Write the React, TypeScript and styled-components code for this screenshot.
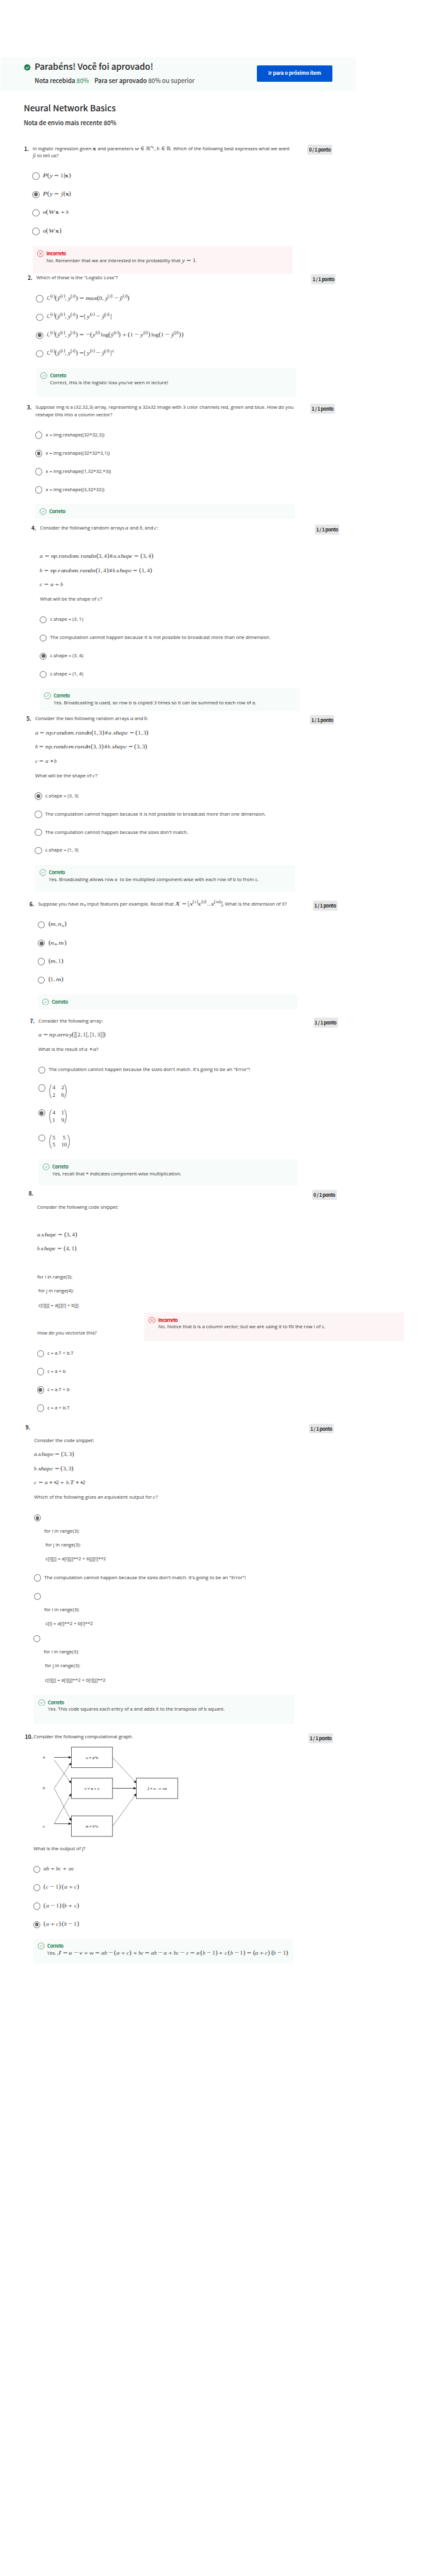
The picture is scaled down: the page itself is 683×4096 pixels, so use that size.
import React from "react";
import styled, { createGlobalStyle } from "styled-components";

const SCALE = 0.68267;
const u = (n: number) => `${(n * SCALE).toFixed(3)}px`;

const HEADING = `"Noto Sans CJK SC", "Open Sans", sans-serif`;
const BODY = `"Open Sans", "Noto Sans", sans-serif`;
const SERIF = `"Liberation Serif", "DejaVu Serif", serif`;
const SANS = `"Liberation Sans", sans-serif`;

const GlobalStyle = createGlobalStyle`
  * { box-sizing: border-box; }
  html, body { margin: 0; padding: 0; background: #fff; }
  body { font-family: ${BODY}; color: #333; font-size: ${u(11.2)}; line-height: ${u(16.8)}; }
`;

const Page = styled.div`
  width: ${u(1000)};
  height: 4096px;
  padding-top: ${u(133)};
  overflow: hidden;
`;

/* ---------- header ---------- */

const Banner = styled.header`
  display: flex;
  align-items: flex-start;
  justify-content: space-between;
  width: ${u(825)};
  height: ${u(79)};
  margin-left: ${u(2)};
  padding: ${u(14)} ${u(54)} 0 ${u(54)};
  background: #f7fbf9;
`;

const BannerText = styled.div`
  display: grid;
  grid-template-columns: ${u(24.7)} auto;
`;

const BannerTitle = styled.h1`
  margin: 0;
  font: 500 ${u(19.95)} / ${u(16)} ${HEADING};
  color: #1f1f1f;
  white-space: nowrap;
`;

const BannerMeta = styled.p`
  grid-column: 2;
  display: flex;
  gap: ${u(12.8)};
  margin: ${u(15.9)} 0 0;
  font: 400 ${u(14.2)} / ${u(16)} ${HEADING};
  color: #333;
  white-space: nowrap;
`;

const Strong = styled.b`
  font-weight: 500;
  color: #1f1f1f;
`;

const Passed = styled.span`
  color: #1d7c50;
`;

const NextButton = styled.button`
  width: ${u(175)};
  height: ${u(38)};
  margin-top: ${u(5)};
  padding: 0 0 ${u(2.4)};
  border: 0;
  border-radius: ${u(2.6)};
  background: #0056d2;
  color: #fff;
  font: 700 ${u(11.8)} / ${u(35.6)} ${HEADING};
  letter-spacing: ${u(-0.25)};
  white-space: nowrap;
`;

const Summary = styled.section`
  padding-left: ${u(55.2)};
  color: #1f1f1f;
`;

const QuizTitle = styled.h2`
  margin: ${u(29.3)} 0 0;
  font: 500 ${u(19.95)} / ${u(20)} ${HEADING};
`;

const QuizGrade = styled.h3`
  margin: ${u(15.5)} 0 0;
  font: 500 ${u(14.2)} / ${u(20)} ${HEADING};
`;

/* ---------- questions ---------- */

const QuestionRow = styled.section<{ $top: number; $left: number }>`
  display: grid;
  grid-template-columns: ${u(20)} ${u(639.4)} ${u(57.4)};
  align-items: start;
  margin-top: ${(p) => u(p.$top)};
  padding-left: ${(p) => u(p.$left)};
`;

const QuestionNumber = styled.div`
  font: 700 ${u(12.4)} / ${u(16.4)} ${HEADING};
  letter-spacing: ${u(-0.3)};
  color: #1f1f1f;
  white-space: nowrap;
`;

const Score = styled.div<{ $shift: number }>`
  height: ${u(23)};
  margin-top: ${(p) => u(p.$shift)};
  border-radius: ${u(2.6)};
  background: #e5e7e8;
  color: #1f1f1f;
  font: 700 ${u(11)} / ${u(23)} ${HEADING};
  letter-spacing: ${u(-0.58)};
  text-align: center;
  white-space: nowrap;
`;

const Line = styled.p<{ $gap?: number; $indent?: number }>`
  margin: ${(p) => u(p.$gap ?? 0)} 0 0;
  padding-left: ${(p) => u(p.$indent ?? 0)};
  min-height: ${u(16.8)};
  white-space: pre;
`;

const Options = styled.div<{ $top: number; $gap: number }>`
  display: flex;
  flex-direction: column;
  gap: ${(p) => u(p.$gap)};
  margin: ${(p) => u(p.$top)} 0 0 ${u(-0.6)};
`;

const OptionRow = styled.label<{ $top?: number; $shift?: number }>`
  display: flex;
  align-items: flex-start;
  min-height: ${u(16.8)};
  margin: ${(p) => u(p.$top ?? 0)} 0 0 ${(p) => u(p.$shift ?? 0)};
  white-space: pre;
`;

const OptionText = styled.span`
  display: block;
  margin: ${u(-0.8)} 0 0 ${u(7.6)};
`;

const Radio = styled.span<{ $checked?: boolean }>`
  display: grid;
  place-items: center;
  flex: none;
  width: ${u(16.6)};
  height: ${u(16.6)};
  border: ${u(1.7)} solid #6a6a6a;
  border-radius: 50%;
  &::after {
    content: "";
    width: ${u(8.6)};
    height: ${u(8.6)};
    border-radius: 50%;
    background: ${(p) => (p.$checked ? "#636363" : "transparent")};
  }
`;

const FeedbackBox = styled.div<{ $ok: boolean; $top: number; $height: number }>`
  display: grid;
  grid-template-columns: ${u(22)} auto;
  align-content: start;
  flex: none;
  width: ${u(605)};
  height: ${(p) => u(p.$height)};
  margin-top: ${(p) => u(p.$top)};
  padding: ${u(8.5)} 0 0 ${u(10)};
  background: ${(p) => (p.$ok ? "#f7fbf9" : "#fdf5f5")};
`;

const FeedbackTitle = styled.div<{ $ok: boolean }>`
  font: 700 ${u(10.9)} / ${u(16.8)} ${HEADING};
  letter-spacing: ${u(-0.46)};
  color: ${(p) => (p.$ok ? "#1d7c50" : "#d30001")};
`;

const FeedbackBody = styled.div`
  grid-column: 2;
  white-space: pre;
`;

const SideBySide = styled.div`
  display: flex;
  align-items: flex-start;
  margin-top: ${u(8)};
`;

const SideText = styled.div`
  flex: none;
  width: ${u(249.5)};
  padding-top: ${u(39.2)};
`;

/* ---------- mathematics ---------- */

const Formula = styled.span`
  font-family: ${SERIF};
  font-size: ${u(13.55)};
  line-height: 0;
  white-space: nowrap;
`;
const Sup = styled.sup`
  font-size: 0.7em;
  line-height: 0;
  vertical-align: 0.62em;
`;
const Sub = styled.sub`
  font-size: 0.7em;
  line-height: 0;
  vertical-align: -0.22em;
`;
const Glyph = styled.span<{ $advance: number; $natural: number; $side?: number; $after?: number }>`
  display: inline-block;
  width: ${(p) => p.$advance}em;
  margin: 0 ${(p) => p.$after ?? p.$side ?? 0}em 0 ${(p) => p.$side ?? 0}em;
  transform: scaleX(${(p) => (p.$advance / p.$natural).toFixed(3)});
  transform-origin: 0 0;
`;
const Fence = styled(Glyph)`
  font-size: 1.12em;
`;
const Symbol = styled.span`
  font-family: "DejaVu Sans", sans-serif;
  font-size: 0.92em;
`;
const Thin = styled.span`
  display: inline-block;
  width: 0.17em;
`;

/* Advance in the mathematical face, and the serif face's own advance, in em. */
const ITALIC: Record<string, [number, number]> = {
  a: [0.529, 0.5], b: [0.429, 0.5], c: [0.433, 0.444], d: [0.52, 0.5], e: [0.466, 0.444],
  h: [0.576, 0.5], i: [0.345, 0.278], m: [0.878, 0.722], n: [0.6, 0.5], o: [0.485, 0.5],
  p: [0.503, 0.5], r: [0.465, 0.389], s: [0.469, 0.389], u: [0.572, 0.5], v: [0.51, 0.444],
  w: [0.73, 0.667], x: [0.572, 0.444], y: [0.5, 0.444], ŷ: [0.5, 0.444], σ: [0.571, 0.5],
  P: [0.76, 0.611], X: [0.86, 0.611], J: [0.64, 0.444], T: [0.7, 0.556], W: [1.06, 0.833],
};

const group = (src: string, open: number) => {
  let depth = 0;
  for (let i = open; i < src.length; i++) {
    if (src[i] === "{") depth++;
    if (src[i] === "}" && --depth === 0) return i;
  }
  return src.length;
};

/* Small TeX-like notation: ^{..} _{..} @{bold} !{roman}, letters italic. */
function parse(src: string): React.ReactNode[] {
  const out: React.ReactNode[] = [];
  for (let i = 0; i < src.length; i++) {
    const c = src[i];
    const next = src[i + 1];
    if ("^_@!".includes(c) && next === "{") {
      const end = group(src, i + 1);
      const inner = src.slice(i + 2, end);
      if (c === "^") out.push(<Sup key={i}>{parse(inner)}</Sup>);
      else if (c === "_") out.push(<Sub key={i}>{parse(inner)}</Sub>);
      else if (c === "@") out.push(<Glyph as="b" key={i} $advance={0.607} $natural={0.5}>{inner}</Glyph>);
      else out.push(<span key={i}>{inner}</span>);
      i = end;
    } else if (c === "=") {
      out.push(<Glyph key={i} $advance={0.778} $natural={0.564} $side={0.278} $after={next === "|" ? 0.05 : 0.278}>=</Glyph>);
    } else if (c === "∈") {
      out.push(<Glyph key={i} $advance={0.667} $natural={0.713} $side={0.278}>∈</Glyph>);
    } else if ("+−".includes(c)) {
      const unary = src[i - 1] === "=";
      out.push(<Glyph key={i} $advance={0.778} $natural={0.564} $side={unary ? 0 : 0.222}>{c}</Glyph>);
    } else if (c === "∗") {
      out.push(<Glyph key={i} $advance={0.5} $natural={0.5} $side={src[i - 1] === "∗" ? 0 : 0.222}>∗</Glyph>);
    } else if (c === "#") {
      out.push(<Glyph key={i} $advance={0.5} $natural={0.5} $side={0.12}>#</Glyph>);
    } else if (c === ",") {
      out.push(<Glyph key={i} $advance={0.278} $natural={0.25} $side={0} $after={0.167}>,</Glyph>);
    } else if ("()".includes(c)) {
      out.push(<Fence key={i} $advance={0.347} $natural={0.333}>{c}</Fence>);
    } else if ("[]|".includes(c)) {
      out.push(<Fence key={i} $advance={0.248} $natural={c === "|" ? 0.2 : 0.333}>{c}</Fence>);
    } else if ("ℝℒ".includes(c)) out.push(<Symbol key={i}>{c}</Symbol>);
    else if (c === " ") out.push(<Thin key={i} />);
    else if (ITALIC[c]) {
      out.push(
        <Glyph as="i" key={i} $advance={ITALIC[c][0]} $natural={ITALIC[c][1]} $side={"yŷ".includes(c) ? 0.06 : 0} $after={0}>
          {c}
        </Glyph>
      );
    } else out.push(<React.Fragment key={i}>{c}</React.Fragment>);
  }
  return out;
}

const M = ({ t }: { t: string }) => <Formula>{parse(t)}</Formula>;

const MatrixBox = styled.span`
  display: flex;
  align-items: stretch;
  height: ${u(32.8)};
  margin: ${u(0.8)} 0 0 ${u(1.5)};
  font: ${u(13.55)} / ${u(16.8)} ${SERIF};
`;
const MatrixCells = styled.span`
  display: grid;
  grid-template-columns: auto auto;
  column-gap: ${u(13.5)};
  justify-items: center;
  margin: 0 ${u(1)} 0 ${u(1.5)};
`;
const Bracket = ({ flip = false }: { flip?: boolean }) => (
  <svg width={6 * SCALE} height={32.8 * SCALE} viewBox="0 0 6 33" preserveAspectRatio="none">
    <path
      d={flip ? "M.6 .5C6.2 8 6.2 25 .6 32.5" : "M5.4 .5C-.2 8 -.2 25 5.4 32.5"}
      fill="none"
      stroke="#333"
      strokeWidth="1.1"
    />
  </svg>
);
const Matrix = ({ cells }: { cells: string[] }) => (
  <MatrixBox>
    <Bracket />
    <MatrixCells>
      {cells.map((c, i) => (
        <span key={i}>{c}</span>
      ))}
    </MatrixCells>
    <Bracket flip />
  </MatrixBox>
);

/* ---------- icons and diagram ---------- */

const Icon = styled.svg<{ $top: number }>`
  display: block;
  width: ${u(15.6)};
  height: ${u(15.6)};
  margin-top: ${(p) => u(p.$top)};
`;

const PassedIcon = () => (
  <Icon viewBox="0 0 16 16" $top={1.9}>
    <circle cx="8" cy="8" r="7.5" fill="#1d7c50" />
    <path d="M4.4 8.2l2.5 2.4 4.7-4.8" fill="none" stroke="#fff" strokeWidth="1.6" />
  </Icon>
);
const StatusIcon = ({ ok }: { ok: boolean }) => (
  <Icon viewBox="0 0 16 16" $top={1.4}>
    <circle cx="8" cy="8" r="7.4" fill="none" stroke={ok ? "#1d7c50" : "#d30001"} strokeWidth="0.9" />
    <path
      d={ok ? "M5 8.3l2 1.9 4-4.6" : "M4.8 4.8l6.4 6.4M11.2 4.8l-6.4 6.4"}
      fill="none"
      stroke={ok ? "#1d7c50" : "#d30001"}
      strokeWidth="0.9"
    />
  </Icon>
);

const Diagram = styled.svg`
  display: block;
  width: ${u(350)};
  height: ${u(216)};
  margin-top: ${u(11.5)};
`;

const NODES = [
  { x: 88.3, y: 4.4, label: "u = a*b" },
  { x: 88.3, y: 76.4, label: "v = a + c" },
  { x: 88.3, y: 164.4, label: "w = b*c" },
  { x: 239.8, y: 76.4, label: "J = u - v +w" },
];
const INPUTS = [
  { y: 28.4, label: "a" },
  { y: 100.4, label: "b" },
  { y: 188.4, label: "c" },
];
const EDGES = [
  [48.5, 28.4, 88, 28.4],
  [48.5, 34.5, 88, 88.3],
  [48.5, 100.4, 88, 40.8],
  [48.5, 100.4, 88, 176],
  [48.5, 182.5, 88, 112.8],
  [48.5, 182.8, 88, 182.8],
  [184.5, 28.8, 239.5, 88.3],
  [184.5, 100.4, 239.5, 100.4],
  [184.5, 188.4, 239.5, 112.6],
];

const ComputationGraph = () => (
  <Diagram viewBox="0 0 350 216">
    <defs>
      <marker id="tip" viewBox="0 0 7 6" refX="6.8" refY="3" markerWidth="7" markerHeight="6" orient="auto" markerUnits="userSpaceOnUse">
        <path d="M0 0L7 3L0 6L1.2 3Z" fill="#000" />
      </marker>
    </defs>
    {EDGES.map(([x1, y1, x2, y2], i) => (
      <line key={i} x1={x1} y1={y1} x2={x2} y2={y2} stroke="#000" strokeWidth={y1 === y2 ? 1 : 0.6} markerEnd="url(#tip)" />
    ))}
    {NODES.map((n) => (
      <g key={n.label}>
        <rect x={n.x} y={n.y} width="96" height="48" fill="#fff" stroke="#000" strokeWidth="0.9" />
        <text x={n.x + 48} y={n.y + 27.3} textAnchor="middle" fontFamily={SANS} fontSize="9" fill="#222">
          {n.label}
        </text>
      </g>
    ))}
    {INPUTS.map((n) => (
      <text key={n.label} x="24.3" y={n.y + 2.8} textAnchor="middle" fontFamily={SANS} fontSize="9" fill="#333">
        {n.label}
      </text>
    ))}
  </Diagram>
);

/* ---------- composition ---------- */

interface QuestionProps {
  n: number;
  top: number;
  left: number;
  points: number;
  shift?: number;
  children: React.ReactNode;
}
const Question = ({ n, top, left, points, shift = 0, children }: QuestionProps) => (
  <QuestionRow $top={top} $left={left}>
    <QuestionNumber>{n}.</QuestionNumber>
    <div>{children}</div>
    <Score $shift={shift}>{points} / 1 ponto</Score>
  </QuestionRow>
);

interface OptionProps {
  checked?: boolean;
  top?: number;
  shift?: number;
  children?: React.ReactNode;
}
const Option = ({ checked, top, shift, children }: OptionProps) => (
  <OptionRow $top={top} $shift={shift}>
    <Radio $checked={checked} />
    <OptionText>{children}</OptionText>
  </OptionRow>
);

interface FeedbackProps {
  ok?: boolean;
  top?: number;
  height: number;
  children?: React.ReactNode;
}
const Feedback = ({ ok = false, top = 0, height, children }: FeedbackProps) => (
  <FeedbackBox $ok={ok} $top={top} $height={height}>
    <StatusIcon ok={ok} />
    <FeedbackTitle $ok={ok}>{ok ? "Correto" : "Incorreto"}</FeedbackTitle>
    {children && <FeedbackBody>{children}</FeedbackBody>}
  </FeedbackBox>
);

const LOSS = "ℒ^{(i)}(ŷ^{(i)},y^{(i)})";

export default function App() {
  return (
    <Page>
      <GlobalStyle />
      <Banner>
        <BannerText>
          <PassedIcon />
          <BannerTitle>Parabéns! Você foi aprovado!</BannerTitle>
          <BannerMeta>
            <span>
              <Strong>Nota recebida</Strong> <Passed>80%</Passed>
            </span>
            <span>
              <Strong>Para ser aprovado</Strong> 80% ou superior
            </span>
          </BannerMeta>
        </BannerText>
        <NextButton>Ir para o próximo item</NextButton>
      </Banner>
      <Summary>
        <QuizTitle>Neural Network Basics</QuizTitle>
        <QuizGrade>Nota de envio mais recente 80%</QuizGrade>
      </Summary>

      <Question n={1} top={41.1} left={56} points={0} shift={-0.9}>
        <Line>
          In logistic regression given <M t="@{x}" /> and parameters <M t="w∈ℝ^{n_{x}},b∈ℝ" />. Which of the following best expresses what we want
        </Line>
        <Line>
          <M t="ŷ" /> to tell us?
        </Line>
        <Options $top={30.4} $gap={26.1}>
          <Option><M t="P(y=1|@{x})" /></Option>
          <Option checked><M t="P(y=ŷ|@{x})" /></Option>
          <Option><M t="σ(W @{x}+b" /></Option>
          <Option><M t="σ(W @{x})" /></Option>
        </Options>
        <Feedback top={25.7} height={64.3}>
          No. Remember that we are interested in the probability that <M t="y=1" />.
        </Feedback>
      </Question>

      <Question n={2} top={2} left={64.5} points={1}>
        <Line>Which of these is the "Logistic Loss"?</Line>
        <Options $top={31.6} $gap={25.9}>
          <Option><M t={LOSS + "=max(0,y^{(i)}−ŷ^{(i)})"} /></Option>
          <Option><M t={LOSS + "=| y^{(i)}−ŷ^{(i)} |"} /></Option>
          <Option checked><M t={LOSS + "=−(y^{(i)} !{log}(ŷ^{(i)})+(1−y^{(i)}) !{log}(1−ŷ^{(i)}))"} /></Option>
          <Option><M t={LOSS + "=| y^{(i)}−ŷ^{(i)} |^{2}"} /></Option>
        </Options>
        <Feedback ok top={24.6} height={67.7}>
          Correct, this is the logistic loss you've seen in lecture!
        </Feedback>
      </Question>

      <Question n={3} top={16} left={62.5} points={1} shift={0.3}>
        <Line>Suppose img is a (32,32,3) array, representing a 32x32 image with 3 color channels red, green and blue. How do you</Line>
        <Line>reshape this into a column vector?</Line>
        <Options $top={31.1} $gap={25.6}>
          <Option>x = img.reshape((32*32,3))</Option>
          <Option checked>x = img.reshape((32*32*3,1))</Option>
          <Option>x = img.reshape((1,32*32,*3))</Option>
          <Option>x = img.reshape((3,32*32))</Option>
        </Options>
        <Feedback ok top={24.6} height={34.7} />
      </Question>

      <Question n={4} top={12.8} left={73} points={1} shift={0.5}>
        <Line>
          Consider the following random arrays <M t="a" /> and <M t="b" />, and <M t="c" />:
        </Line>
        <Line $gap={49.6}><M t="a=np.random.randn(3,4)#a.shape=(3,4)" /></Line>
        <Line $gap={16.2}><M t="b=np.random.randn(1,4)#b.shape=(1,4)" /></Line>
        <Line $gap={15.8}><M t="c=a+b" /></Line>
        <Line $gap={17.2}>What will be the shape of <M t="c" />?</Line>
        <Options $top={31} $gap={25.6}>
          <Option>c.shape = (3, 1)</Option>
          <Option>The computation cannot happen because it is not possible to broadcast more than one dimension.</Option>
          <Option checked>c.shape = (3, 4)</Option>
          <Option>c.shape = (1, 4)</Option>
        </Options>
        <Feedback ok top={23.6} height={53.7}>
          Yes. Broadcasting is used, so row b is copied 3 times so it can be summed to each row of a.
        </Feedback>
      </Question>

      <Question n={5} top={8.7} left={61.7} points={1}>
        <Line>
          Consider the two following random arrays <M t="a" /> and <M t="b" />:
        </Line>
        <Line $gap={16.9}><M t="a=np.random.randn(1,3)#a.shape=(1,3)" /></Line>
        <Line $gap={16.2}><M t="b=np.random.randn(3,3)#b.shape=(3,3)" /></Line>
        <Line $gap={16.5}><M t="c=a∗b" /></Line>
        <Line $gap={16.2}>What will be the shape of <M t="c" />?</Line>
        <Options $top={31.3} $gap={25.5}>
          <Option checked>c.shape = (3, 3)</Option>
          <Option>The computation cannot happen because it is not possible to broadcast more than one dimension.</Option>
          <Option>The computation cannot happen because the sizes don't match.</Option>
          <Option>c.shape = (1, 3)</Option>
        </Options>
        <Feedback ok top={24.9} height={62.7}>
          Yes. Broadcasting allows row a  to be multiplied component-wise with each row of b to from c.
        </Feedback>
      </Question>

      <Question n={6} top={20.1} left={68.5} points={1} shift={0.4}>
        <Line>
          Suppose you have <M t="n_{x}" /> input features per example. Recall that <M t="X=[x^{(1)}x^{(2)}...x^{(m)}]" />. What is the dimension of X?
        </Line>
        <Options $top={31.2} $gap={26.2}>
          <Option><M t="(m,n_{x})" /></Option>
          <Option checked><M t="(n_{x},m)" /></Option>
          <Option><M t="(m,1)" /></Option>
          <Option><M t="(1,m)" /></Option>
        </Options>
        <Feedback ok top={24.6} height={34.5} />
      </Question>

      <Question n={7} top={19} left={69.5} points={1} shift={0.8}>
        <Line>Consider the following array:</Line>
        <Line $gap={16.3}><M t="a=np.array([[2,1],[1,3]])" /></Line>
        <Line $gap={16.9}>What is the result of <M t="a∗a" />?</Line>
        <Options $top={31.1} $gap={25.2}>
          <Option>The computation cannot happen because the sizes don't match. It's going to be an "Error"!</Option>
          <Option><Matrix cells={["4", "2", "2", "6"]} /></Option>
          <Option checked><Matrix cells={["4", "1", "1", "9"]} /></Option>
          <Option><Matrix cells={["5", "5", "5", "10"]} /></Option>
        </Options>
        <Feedback ok top={25.1} height={61}>
          Yes, recall that * indicates component-wise multiplication.
        </Feedback>
      </Question>

      <Question n={8} top={10.8} left={66.5} points={0} shift={-0.5}>
        <Line $gap={31.4}>Consider the following code snippet:</Line>
        <Line $gap={48.2}><M t="a.shape=(3,4)" /></Line>
        <Line $gap={16.2}><M t="b.shape=(4,1)" /></Line>
        <Line $gap={48.2}>for i in range(3):</Line>
        <Line $gap={16.2} $indent={3}>for j in range(4):</Line>
        <Line $gap={16.2} $indent={3}>c[i][j] = a[j][i] + b[j]</Line>
        <SideBySide>
          <SideText>How do you vectorize this?</SideText>
          <Feedback height={68}>
            No. Notice that b is a column vector; but we are using it to fill the row i of c.
          </Feedback>
        </SideBySide>
        <Options $top={19.6} $gap={25.5}>
          <Option>c = a.T + b.T</Option>
          <Option>c = a + b</Option>
          <Option checked>c = a.T + b</Option>
          <Option>c = a + b.T</Option>
        </Options>
      </Question>

      <Question n={9} top={28} left={59.5} points={1}>
        <Line $gap={31}>Consider the code snippet:</Line>
        <Line $gap={16.2}><M t="a.shape=(3,3)" /></Line>
        <Line $gap={16.2}><M t="b.shape=(3,3)" /></Line>
        <Line $gap={16.2}><M t="c=a∗∗2+b.T∗∗2" /></Line>
        <Line $gap={16.2}>Which of the following gives an equivalent output for <M t="c" />?</Line>
        <Options $top={31.6} $gap={0}>
          <Option checked />
          <Line $gap={13.8} $indent={24}>for i in range(3):</Line>
          <Line $gap={15.7} $indent={27}>for j in range(3):</Line>
          <Line $gap={15.7} $indent={27}>c[i][j] = a[i][j]**2 + b[j][i]**2</Line>
          <Option top={27.2}>The computation cannot happen because the sizes don't match. It's going to be an "Error"!</Option>
          <Option top={26.3} />
          <Line $gap={14.1} $indent={24}>for i in range(3):</Line>
          <Line $gap={15.2} $indent={27}>c[i] = a[i]**2 + b[i]**2</Line>
          <Option top={19.1} shift={-1.2} />
          <Line $gap={13.3} $indent={22.8}>for i in range(3):</Line>
          <Line $gap={16.2} $indent={25.8}>for j in range(3):</Line>
          <Line $gap={16.2} $indent={25.8}>c[i][j] = a[i][j]**2 + b[i][j]**2</Line>
        </Options>
        <Feedback ok top={26} height={67.7}>
          Yes. This code squares each entry of a and adds it to the transpose of b square.
        </Feedback>
      </Question>

      <Question n={10} top={22.1} left={58} points={1}>
        <Line>Consider the following computational graph.</Line>
        <ComputationGraph />
        <Line $gap={16.2}>What is the output of J?</Line>
        <Options $top={31} $gap={26.2}>
          <Option><M t="ab+bc+ac" /></Option>
          <Option><M t="(c−1) (a+c)" /></Option>
          <Option><M t="(a−1) (b+c)" /></Option>
          <Option checked><M t="(a+c) (b−1)" /></Option>
        </Options>
        <Feedback ok top={24.2} height={57}>
          Yes. <M t="J=u−v+w=ab−(a+c)+bc=ab−a+bc−c=a (b−1)+c (b−1)=(a+c) (b−1)" />
        </Feedback>
      </Question>
    </Page>
  );
}
